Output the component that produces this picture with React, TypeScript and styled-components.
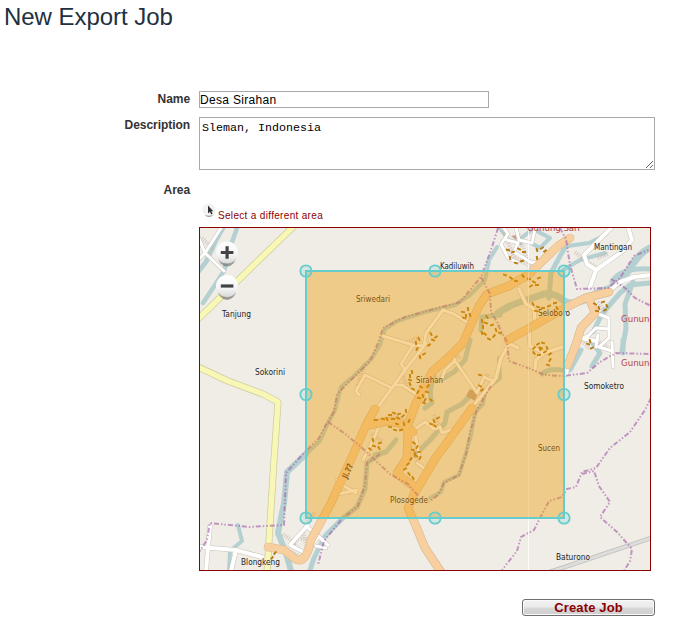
import React from 'react';
import styled, { createGlobalStyle } from 'styled-components';

const GlobalStyle = createGlobalStyle`
  * { box-sizing: border-box; }
  body { margin: 0; background: #fff; font-family: "Liberation Sans", Arial, sans-serif; }
`;

const Page = styled.main`
  width: 675px;
  height: 629px;
  overflow: hidden;
  display: flex;
  flex-direction: column;
`;
const Title = styled.h1`
  margin: 3px 0 0 4px;
  height: 88px;
  font-size: 24px;
  line-height: 28px;
  font-weight: 400;
  letter-spacing: -0.04px;
  color: #22303f;
`;
const Form = styled.form`
  display: flex;
  flex-direction: column;
`;
const Row = styled.div<{ $height: number }>`
  display: grid;
  grid-template-columns: 190px 456px;
  column-gap: 9px;
  align-items: start;
  height: ${(p) => p.$height}px;
`;
const Label = styled.label`
  text-align: right;
  font-size: 12px;
  line-height: 16px;
  font-weight: 700;
  letter-spacing: -0.05px;
  color: #333;
`;
const NameInput = styled.input`
  width: 290px;
  height: 17px;
  padding: 0;
  border: 1px solid #a9a9ac;
  border-radius: 0;
  font: 12px/15px "Liberation Sans", Arial, sans-serif;
  letter-spacing: 0.32px;
  color: #000;
  outline: 0;
`;
const Description = styled.textarea`
  display: block;
  width: 456px;
  height: 53px;
  padding: 2px;
  border: 1px solid #a9a9ac;
  font: 11.67px/16px "Liberation Mono", "Courier New", monospace;
  color: #000;
  resize: both;
  outline: 0;
`;
const AreaLink = styled.a`
  display: flex;
  align-items: flex-end;
  gap: 2px;
  height: 24px;
  margin: 0 0 4px 202px;
  font-size: 10px;
  line-height: 14px;
  letter-spacing: 0.32px;
  color: #8b0000;
`;
const CursorIcon = styled.svg`
  width: 14px;
  height: 18px;
  margin-bottom: 4px;
`;
const MapFrame = styled.div`
  width: 452px;
  height: 344px;
  margin-left: 199px;
  border: 1px solid #8b0000;
  overflow: hidden;
`;
const MapSvg = styled.svg`
  display: block;
  width: 450px;
  height: 342px;
  font-family: "DejaVu Sans", "Noto Sans", sans-serif;
`;
const Actions = styled.div`
  display: flex;
  justify-content: flex-end;
  padding: 28px 20px 0 0;
`;
const CreateButton = styled.button`
  width: 133px;
  height: 17px;
  padding: 0;
  border: 1px solid #707070;
  border-radius: 3px;
  background: linear-gradient(#f2f2f2 0%, #ebebeb 48%, #d8d8d8 52%, #cfcfcf 100%);
  box-shadow: inset 0 0 0 1px #fafafa;
  font: 700 13px/14px "Liberation Sans", Arial, sans-serif;
  letter-spacing: 0.15px;
  color: #8b0000;
`;

type Line = { d: string; w?: number };

const water: Line[] = [
  { d: 'M237 228L231 245L224 271L213 288L203 303', w: 4.5 },
  { d: 'M224 226L216 240L206 262L198 272', w: 5 },
  { d: 'M497 247L489 260L485 280L470 295L455 305L425 312L397 321L385 329L380 345L372 358L355 375L341 387L335 410L328 423L320 441L306 454', w: 4 },
  { d: 'M306 454L287 472L284 503L278 533L286 553L291 571', w: 6 },
  { d: 'M498 313Q510 305 520 302T541 295T563 300T600 291Q618 288 629 270T650 248', w: 7 },
  { d: 'M566 246L560 256L551 273L549 298', w: 5 },
  { d: 'M563 270L580 260L605 253M568 246L589 243L605 235L612 227', w: 4 },
  { d: 'M612 282Q620 267 651 269', w: 5 },
  { d: 'M651 283L630 285L620 293L602 314L593 332', w: 5 },
  { d: 'M633 282L625 304L626 328L622 351', w: 5 },
  { d: 'M470 340L465 360L454 372L442 379', w: 5 },
  { d: 'M434 376Q428 393 432 403L425 408', w: 5 },
  { d: 'M476 390L462 404L447 412L445 423L430 440L415 455', w: 5 },
  { d: 'M396 440L386 452L375 455', w: 5 },
  { d: 'M485 392L483 404L475 412L471 435L466 453L459 475L444 482L441 492L430 498', w: 4 },
  { d: 'M542 374Q550 367 566 371M570 370L581 350M592 342L600 353L592 366M623 340L623 353', w: 5 },
  { d: 'M499 358L500 378L488 388', w: 4 },
  { d: 'M380 454L367 463L365 489L357 507L343 518L325 536L314 558L310 570', w: 5 },
  { d: 'M238 525L242 541L230 551L229 571', w: 4 },
  { d: 'M481 330L482 317L500 315', w: 5 },
  { d: 'M520 239L533 229L550 238L540 248L531 243', w: 4 },
  { d: 'M498 227L508 239L521 244', w: 3 },
];

const yellow = ['M198 319L294 226', 'M198 367L228 381L263 394L278 402L274 460L267 573'];

const white: Line[] = [
  { d: 'M221 228L205 253L224 271M198 236L205 253L199 259' },
  { d: 'M504 228L508 234L501 244L508 258L517 262M507 240L518 243L514 252L532 263L541 261M516 228L519 240L532 243L535 229' },
  { d: 'M613 226L584 255L587 264L596 270L606 263L624 250L632 240L628 227M596 270L590 287', w: 4 },
  { d: 'M609 291L620 282L634 277L651 275', w: 4 },
  { d: 'M589 302L598 314L609 318L609 338L599 347L612 351M609 329L596 328L588 336L577 340M596 347L598 335M612 342L613 367', w: 3 },
  { d: 'M572 349L581 338L596 341M570 355L566 374', w: 4 },
  { d: 'M359 395L356 391L365 375L392 388L378 407M392 388L405 370L421 350L426 343M405 370L401 364L413 345L383 336M413 345L424 346L426 333L443 310L454 314L470 324', w: 3 },
  { d: 'M394 385L402 385L416 394M442 378L445 370L455 361L465 375L477 393L484 377L493 381M455 361L452 352', w: 3 },
  { d: 'M511 340L501 358L496 378L474 405M519 289L526 304L534 309L535 320M529 326L530 346L544 353L562 347M510 344L518 348M544 353L536 360L535 369', w: 3.5 },
  { d: 'M412 431L425 422L434 429L440 427L442 433L453 429M363 460L374 438L380 424M414 428L419 455M337 480L338 494L357 490M342 485L356 493', w: 3 },
  { d: 'M210 526L206 571M199 547L236 550L269 559M236 550L231 571', w: 4 },
  { d: 'M308 525L290 545L307 554L318 536L306 526M318 536L328 545', w: 3.5 },
  { d: 'M316 546L326 548M417 463L427 470', w: 3 },
];

const orange: Line[] = [
  { d: 'M570 238L558 246L528 275L509 286L487 294L479 306L463 343L451 355L432 372L416 403L408 425L407 458L397 473' },
  { d: 'M609 292L585 298L563 309L531 327L508 340' },
  { d: 'M589 298L595 313L581 328L576 344L568 365' },
  { d: 'M472 408L435 459L419 486L414 494L408 508L416 526L425 548L441 572' },
  { d: 'M375 409L367 423L352 457L331 503L311 540Q306 565 295 559L284 550L268 547' },
  { d: 'M370 425L388 421L402 424L413 432M397 474L416 488' },
];

const boundaries = [
  'M498 228L492 247L481 277L460 302L438 308L405 317L383 328L378 343L370 361L349 382L337 394L334 412L324 428L319 438L302 455L286 473L284 525L249 527L210 523L207 540L199 552',
  'M560 228L566 239L570 265L577 289L608 288L620 278L634 256L651 249M611 279L625 288L635 298L651 306',
  'M498 325L507 342L509 361L528 368L545 375L563 376L587 373L600 362L616 353L651 354',
  'M481 277L490 294L491 312L500 327M328 422L344 433L360 446L376 461L390 474L408 484L419 497',
  'M651 398L645 410L630 432L610 448L605 455L596 468L582 472L576 487L567 489L562 497L549 501L540 518L534 530L521 537L517 551L502 570',
  'M582 474L594 471L599 486L610 502L600 517L617 532L632 549L630 561L624 571',
  'M491 386L485 396L477 410L470 432L466 454L459 475L444 483L438 495L429 502M380 454L367 463L365 485L358 506L342 519M341 520L324 541L318 565',
];

/* Each building is a short tilted stroke: x, y, angle. */
const buildings: [number, number, number][] = [
  [463, 312, 10], [468, 309, 80], [466, 316, 85], [470, 315, 70], [464, 318, 20],
  [482, 321, 80], [483, 327, 85], [485, 334, 40], [489, 339, 25], [494, 336, -50], [496, 330, 70], [492, 325, -20], [486, 323, 20], [482, 333, 70], [500, 333, 20], [487, 317, 50],
  [508, 250, 15], [513, 252, -20], [519, 249, 25], [524, 252, 0], [510, 258, 75], [516, 263, 20], [522, 261, -15], [505, 275, 20], [511, 278, 40], [516, 281, 10],
  [537, 250, 70], [542, 248, -30], [545, 251, -40], [537, 258, 80], [529, 279, 15], [534, 282, 30], [539, 278, -20], [531, 286, -30], [537, 285, 0], [523, 276, 50],
  [533, 304, 60], [538, 307, 20], [543, 308, 0], [549, 306, -25], [555, 303, -15], [557, 308, 60], [536, 311, 10], [543, 313, -20],
  [534, 348, -45], [538, 344, -30], [543, 343, 20], [547, 348, 70], [534, 353, 50], [539, 355, 0], [545, 352, -30], [550, 354, -40], [541, 348, 25], [550, 360, -60], [548, 365, 20], [540, 349, 70],
  [417, 349, -60], [420, 357, 75], [416, 343, 80], [419, 339, 65], [429, 345, -35], [433, 340, 25], [436, 337, -40], [431, 334, 60], [424, 354, -30],
  [410, 376, 85], [410, 384, 70], [413, 389, 25], [418, 392, -60], [423, 396, 70], [427, 392, 20], [425, 400, -60], [419, 398, 10], [428, 386, -50], [412, 372, 80], [431, 400, 45], [421, 387, 30], [424, 403, 20], [410, 380, 20],
  [376, 420, 0], [390, 415, 0], [394, 413, 20], [399, 414, -20], [387, 419, 60], [393, 419, 0], [398, 418, 25], [403, 416, -45], [390, 427, 10], [395, 430, 20], [401, 430, -15], [404, 424, 75], [409, 421, -65], [383, 419, 20], [397, 424, 20], [406, 411, 80],
  [373, 440, 80], [374, 446, 20], [380, 443, -20], [370, 449, 40], [379, 448, 60],
  [414, 443, 40], [417, 447, -60], [415, 454, 70], [419, 452, -10], [420, 458, -60], [413, 450, 20], [408, 464, -45], [411, 459, -55], [405, 469, -30], [409, 474, 50], [413, 478, 60], [416, 456, 20],
  [434, 421, 65], [435, 426, 40], [438, 418, -30], [431, 424, 20], [480, 386, 30], [482, 390, -40], [480, 375, 10],
  [595, 304, 30], [599, 308, 70], [603, 302, -20], [607, 306, 60], [597, 311, 10], [605, 310, -30],
  [588, 344, 20], [592, 348, -30], [590, 341, 70], [272, 558, -50], [275, 553, -50],
];

const dots = [
  'M202 238L214 250M200 244L210 256M503 230L515 260M518 235L529 263M511 256L537 270M530 265L553 255',
  'M575 252L587 262L600 269M598 258L608 254M598 302L607 314M577 336L590 349M595 340L608 347',
  'M283 534L295 543L303 531L307 549M288 550L301 557M301 539L319 538M314 513L306 525M321 522L318 530',
  'M365 364L357 387M401 372L408 389M405 343L420 337M439 378L446 371M452 351L461 359M478 389L488 374',
  'M371 434L382 441M391 415L405 420M434 415L441 430M408 440L418 461M343 479L335 491L351 493',
];

const places: { x: number; y: number; w: number; name: string }[] = [
  { x: 222, y: 317, w: 29, name: 'Tanjung' },
  { x: 255, y: 375, w: 30, name: 'Sokorini' },
  { x: 440, y: 269, w: 34, name: 'Kadiluwih' },
  { x: 356, y: 302, w: 34, name: 'Sriwedari' },
  { x: 594, y: 250, w: 38, name: 'Mantingan' },
  { x: 538, y: 316, w: 32, name: 'Seloboro' },
  { x: 416, y: 383, w: 27, name: 'Sirahan' },
  { x: 584, y: 389, w: 40, name: 'Somoketro' },
  { x: 538, y: 451, w: 22, name: 'Sucen' },
  { x: 390, y: 503, w: 38, name: 'Plosogede' },
  { x: 241, y: 565, w: 39, name: 'Blongkeng' },
  { x: 556, y: 560, w: 34, name: 'Baturono' },
];

const handles = [
  [306, 271], [435, 271], [564, 271],
  [306, 394.5], [564, 394.5],
  [306, 518], [435, 518], [564, 518],
];

function Ways({ lines, color, extra = 0, base = 3 }: { lines: Line[]; color: string; extra?: number; base?: number }) {
  return (
    <g fill="none" stroke={color} strokeLinecap="round" strokeLinejoin="round">
      {lines.map((l) => <path key={l.d} d={l.d} strokeWidth={(l.w ?? base) + extra} />)}
    </g>
  );
}

function ZoomControl({ y, plus }: { y: number; plus?: boolean }) {
  return (
    <g>
      <ellipse cx="227" cy={y + 4} rx="9" ry="10" fill="#666" opacity=".6" />
      <circle cx="227" cy={y} r="11" fill="url(#knob)" />
      <path d={`M220.8 ${y}h12.6${plus ? `M227.1 ${y - 6.3}v12.6` : ''}`} stroke="#444" strokeWidth="3.2" />
    </g>
  );
}

function AreaMap() {
  const yellowLines = yellow.map((d) => ({ d }));
  return (
    <MapSvg viewBox="200 228 450 342">
      <defs>
        <linearGradient id="knob" x1="0" y1="0" x2="0" y2="1">
          <stop offset="0" stopColor="#fff" />
          <stop offset=".6" stopColor="#f5f5f5" />
          <stop offset="1" stopColor="#d9d9d9" />
        </linearGradient>
      </defs>
      <rect x="199" y="227" width="452" height="344" fill="#f0ede6" />
      <Ways lines={water} color="#b5d0d0" />
      <g fill="#c4a392">
        <path d="M470 389l8 4l-3 8l-9-5zM511 236l10-2l-5 6z" />
      </g>
      <g fill="none" stroke="#bfa7a0" strokeWidth="4" strokeDasharray="1 1.4" opacity=".5">
        {dots.map((d) => <path key={d} d={d} />)}
      </g>
      <path d="M550 572L651 538" stroke="#bdbdbd" strokeWidth="4.5" />
      <path d="M550 572L651 538" stroke="#dddddb" strokeWidth="3" />
      <Ways lines={white} color="#c9c4bd" extra={1} />
      <Ways lines={white} color="#fff" />
      <Ways lines={yellowLines} color="#cdcca0" base={7} />
      <Ways lines={yellowLines} color="#f8f7b5" base={5.5} />
      <Ways lines={orange} color="#d9b78f" base={8.6} />
      <Ways lines={orange} color="#f8d0a0" base={7.4} />
      <g fill="none" stroke="#a45aaa" strokeWidth="2" strokeDasharray="5 2 1.5 2 1.5 2" opacity=".6">
        {boundaries.map((d) => <path key={d} d={d} />)}
      </g>
      <g stroke="#b57a10" strokeWidth="1.9">
        {buildings.map(([x, y, a]) => (
          <path key={`${x}-${y}`} d="M-2 0h4" transform={`translate(${x} ${y}) rotate(${a})`} />
        ))}
      </g>
      <path d="M528.5 227V571" stroke="#fff" strokeWidth="1" opacity=".8" />
      <text x="347" y="479" fontSize="8" fill="#3a2c18" stroke="#3a2c18" strokeWidth=".3" textLength="15" lengthAdjust="spacingAndGlyphs" transform="rotate(-65 347 479)">Jl.??</text>
      <g fontSize="8" fill="#1c1c1c" stroke="#f5f2ec" strokeWidth="1.2" strokeOpacity=".65" paintOrder="stroke">
        {places.map((p) => (
          <text key={p.name} x={p.x} y={p.y} textLength={p.w} lengthAdjust="spacingAndGlyphs">{p.name}</text>
        ))}
      </g>
      <g fontSize="9" fill="#b7434c">
        <text x="527" y="231" textLength="53" lengthAdjust="spacingAndGlyphs">Gunung Sari</text>
        <text x="621" y="322" textLength="34" lengthAdjust="spacingAndGlyphs">Gunung</text>
        <text x="621" y="366" textLength="34" lengthAdjust="spacingAndGlyphs">Gunung</text>
      </g>
      <rect x="306" y="271" width="258" height="247" fill="#ee9900" fillOpacity=".4" stroke="#66cccc" strokeWidth="2" />
      <g fill="#66cccc" fillOpacity=".2" stroke="#66cccc" strokeWidth="1.8">
        {handles.map(([x, y]) => <circle key={`${x}-${y}`} cx={x} cy={y} r="5.7" />)}
      </g>
      <ZoomControl y={252.5} plus />
      <ZoomControl y={286} />
    </MapSvg>
  );
}

export default function App() {
  return (
    <Page>
      <GlobalStyle />
      <Title>New Export Job</Title>
      <Form onSubmit={(e: React.FormEvent) => e.preventDefault()}>
        <Row $height={26}>
          <Label htmlFor="name">Name</Label>
          <NameInput id="name" defaultValue="Desa Sirahan" />
        </Row>
        <Row $height={65}>
          <Label htmlFor="description">Description</Label>
          <Description id="description" defaultValue="Sleman, Indonesia" spellCheck={false} />
        </Row>
        <Row $height={17}>
          <Label>Area</Label>
        </Row>
        <AreaLink>
          <CursorIcon viewBox="0 0 14 18">
            <circle cx="7" cy="9" r="6.7" fill="#f3f3f3" />
            <path d="M2.5 14Q7 18 11.5 14Q7 15.5 2.5 14" fill="#999" />
            <path d="M6 4.5v8l1.9-1.8 1.3 2.8 1.4-.7-1.3-2.6h2z" fill="#333" />
          </CursorIcon>
          Select a different area
        </AreaLink>
        <MapFrame><AreaMap /></MapFrame>
        <Actions><CreateButton type="submit">Create Job</CreateButton></Actions>
      </Form>
    </Page>
  );
}
